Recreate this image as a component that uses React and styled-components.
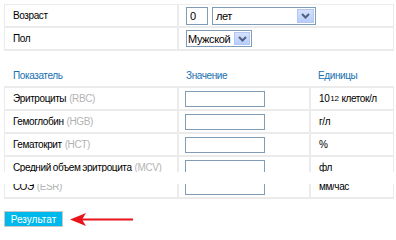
import React from "react";
import styled, { createGlobalStyle } from "styled-components";

const Global = createGlobalStyle`
  html, body { margin: 0; padding: 0; background: #fff; }
  body {
    font-family: "Liberation Sans", Arial, sans-serif;
    font-size: 10px;
    letter-spacing: -0.4px;
    word-spacing: -0.5px;
    color: #000;
  }
`;

const LINE = "#ebebeb";

const Page = styled.div`
  padding: 4px 0 0 4px;
  width: 390px;
`;

const FormTable = styled.div`
  display: grid;
  grid-template-columns: 172px 214px;
  grid-auto-rows: 21px;
  gap: 2px;
  padding: 1px 1px 2px 1px;
  background: ${LINE};
`;

const FormCell = styled.div`
  background: #fff;
  display: flex;
  align-items: center;
  gap: 4px;
  padding-left: ${(p) => (p.$label ? 8 : 7)}px;
`;

const TextInput = styled.div`
  box-sizing: border-box;
  width: ${(p) => p.$w}px;
  height: ${(p) => p.$h}px;
  border: 1px solid #7f9db9;
  background: #fff;
  padding-left: 3px;
  display: flex;
  align-items: center;
  font-size: 11px;
`;

const SelectBox = styled.div`
  box-sizing: border-box;
  width: ${(p) => p.$w}px;
  height: ${(p) => p.$h}px;
  border: 1px solid #7f9db9;
  background: #fff;
  display: flex;
  align-items: center;
  justify-content: space-between;
  padding: 1px 1px 1px ${(p) => p.$pl}px;
  font-size: 11px;
  white-space: nowrap;
`;

const DropButton = styled.div`
  box-sizing: border-box;
  flex-shrink: 0;
  width: ${(p) => p.$s}px;
  height: 100%;
  background: linear-gradient(#d5e1fd, #b9cdfb);
  border: 1px solid #b4c6f2;
  display: flex;
  align-items: center;
  justify-content: center;
`;

const Chevron = () => (
  <svg width="9" height="6" viewBox="0 0 9 6">
    <path d="M1 1 L4.5 4.5 L8 1" fill="none" stroke="#4d6185" strokeWidth="2" />
  </svg>
);

const Select = ({ w, h, pl, btn, children }) => (
  <SelectBox $w={w} $h={h} $pl={pl}>
    <span>{children}</span>
    <DropButton $s={btn}>
      <Chevron />
    </DropButton>
  </SelectBox>
);

const HeaderRow = styled.div`
  display: grid;
  grid-template-columns: 172px 130px 82px;
  column-gap: 2px;
  height: 22px;
  margin-top: 13px;
  padding: 0 1px;
`;

const HeadCell = styled.div`
  display: flex;
  align-items: center;
  padding-left: ${(p) => p.$pl}px;
  color: #1570b0;
`;

const DataBlock = styled.div`
  display: flex;
  flex-direction: column;
  gap: 2px;
  background: ${LINE};
  padding: ${(p) => (p.$top ? "2px 1px 0 1px" : "0 1px 2px 1px")};
  margin-top: ${(p) => (p.$gapAbove ? 12 : 0)}px;
`;

const DataRow = styled.div`
  display: grid;
  grid-template-columns: 172px 130px 82px;
  column-gap: 2px;
  height: ${(p) => p.$h || 21}px;
`;

const DataCell = styled.div`
  background: #fff;
  display: flex;
  overflow: hidden;
  align-items: ${(p) =>
    p.$clip === "top" ? "flex-end" : p.$clip === "bottom" ? "flex-start" : "center"};
`;

const CellInner = styled.div`
  flex-shrink: 0;
  height: 21px;
  display: flex;
  align-items: center;
  padding-left: ${(p) => p.$pl}px;
  white-space: nowrap;
`;

const Abbr = styled.span`
  color: #b3b3b3;
  margin-left: 3px;
`;

const ValueInput = styled.div`
  box-sizing: border-box;
  width: 80px;
  height: 16px;
  border: 1px solid #7f9db9;
  background: #fff;
`;

const Sup = styled.sup`
  font-size: 8px;
  vertical-align: 4px;
  line-height: 0;
  margin: 0 3px 0 1px;
`;

const Footer = styled.div`
  display: flex;
  align-items: center;
  margin-top: 12px;
  gap: 7px;
`;

const ResultButton = styled.div`
  box-sizing: border-box;
  width: 59px;
  height: 16px;
  background: #00b9ec;
  border: 1px solid #c9c9c9;
  color: #fff;
  font-size: 10px;
  letter-spacing: 0;
  display: flex;
  align-items: center;
  justify-content: center;
`;

const Arrow = () => (
  <svg width="64" height="15" viewBox="0 0 64 15">
    <path d="M0 7.5 L16 1 L12 7.5 L16 14 Z" fill="#e8131b" />
    <rect x="11" y="6.5" width="52" height="2" fill="#e8131b" />
  </svg>
);

const rows = [
  { name: "Эритроциты", abbr: "(RBC)", unit: <>10<Sup>12</Sup>клеток/л</> },
  { name: "Гемоглобин", abbr: "(HGB)", unit: "г/л" },
  { name: "Гематокрит", abbr: "(HCT)", unit: "%" },
  { name: "Средний объем эритроцита", abbr: "(MCV)", unit: "фл", h: 15, clip: "bottom" },
];

const esr = { name: "СОЭ", abbr: "(ESR)", unit: "мм/час", h: 13, clip: "top" };

const Row = ({ r }) => (
  <DataRow $h={r.h}>
    <DataCell $clip={r.clip}>
      <CellInner $pl={8}>
        {r.name}
        <Abbr>{r.abbr}</Abbr>
      </CellInner>
    </DataCell>
    <DataCell $clip={r.clip}>
      <CellInner $pl={6}>
        <ValueInput />
      </CellInner>
    </DataCell>
    <DataCell $clip={r.clip}>
      <CellInner $pl={8}>{r.unit}</CellInner>
    </DataCell>
  </DataRow>
);

export default function App() {
  return (
    <>
      <Global />
      <Page>
        <FormTable>
          <FormCell $label>Возраст</FormCell>
          <FormCell>
            <TextInput $w={22} $h={18}>0</TextInput>
            <Select w={104} h={18} pl={3} btn={17}>лет</Select>
          </FormCell>
          <FormCell $label>Пол</FormCell>
          <FormCell>
            <Select w={66} h={17} pl={1} btn={16}>Мужской</Select>
          </FormCell>
        </FormTable>

        <HeaderRow>
          <HeadCell $pl={8}>Показатель</HeadCell>
          <HeadCell $pl={7}>Значение</HeadCell>
          <HeadCell $pl={7}>Единицы</HeadCell>
        </HeaderRow>

        <DataBlock $top>
          {rows.map((r) => (
            <Row key={r.name} r={r} />
          ))}
        </DataBlock>
        <DataBlock $gapAbove>
          <Row r={esr} />
        </DataBlock>

        <Footer>
          <ResultButton>Результат</ResultButton>
          <Arrow />
        </Footer>
      </Page>
    </>
  );
}
